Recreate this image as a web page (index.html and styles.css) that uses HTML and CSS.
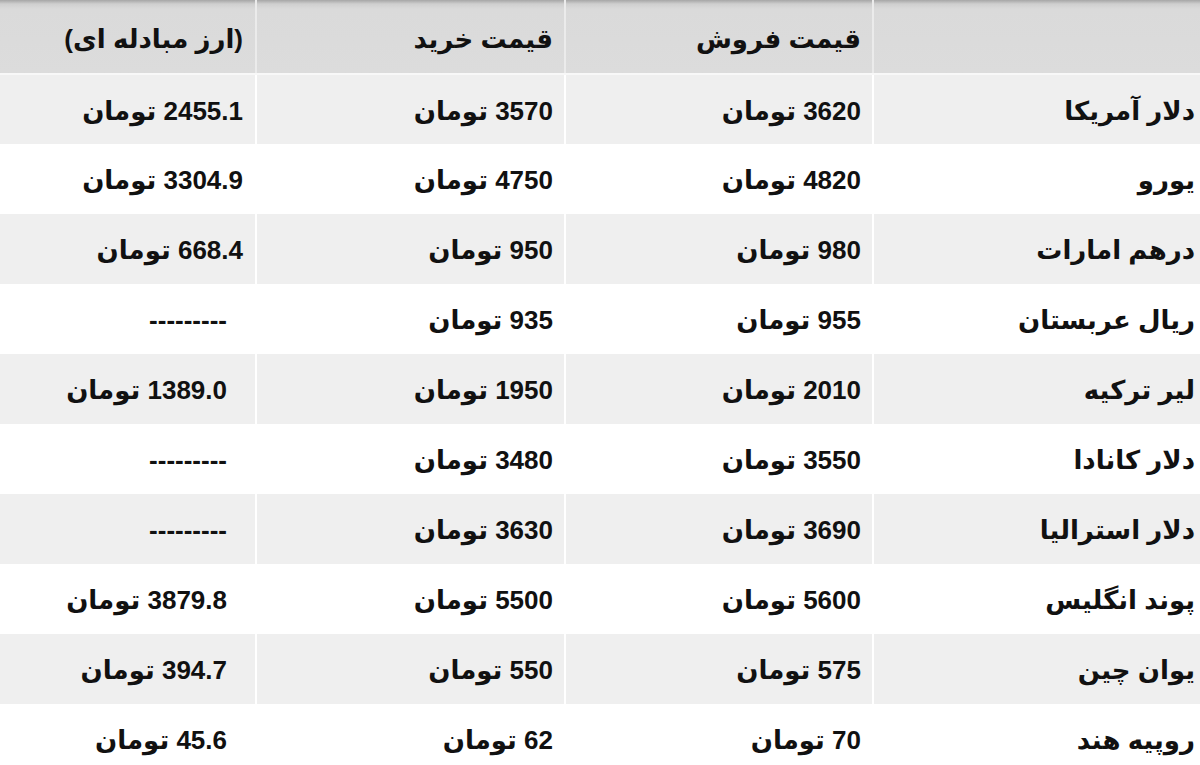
FILE: index.html
```html
<!DOCTYPE html>
<html lang="fa" dir="rtl">
<head>
<meta charset="utf-8">
<title>نرخ ارز</title>
<link rel="stylesheet" href="styles.css">
</head>
<body>
<table class="rates">
  <colgroup>
    <col class="c-name">
    <col class="c-sell">
    <col class="c-buy">
    <col class="c-ex">
  </colgroup>
  <thead>
    <tr>
      <th></th>
      <th>قیمت فروش</th>
      <th>قیمت خرید</th>
      <th>(ارز مبادله ای)</th>
    </tr>
  </thead>
  <tbody>
    <tr><td>دلار آمریکا</td><td>3620 تومان</td><td>3570 تومان</td><td>2455.1 تومان</td></tr>
    <tr><td>یورو</td><td>4820 تومان</td><td>4750 تومان</td><td>3304.9 تومان</td></tr>
    <tr><td>درهم امارات</td><td>980 تومان</td><td>950 تومان</td><td>668.4 تومان</td></tr>
    <tr><td>ریال عربستان</td><td>955 تومان</td><td>935 تومان</td><td class="indent">---------</td></tr>
    <tr><td>لیر ترکیه</td><td>2010 تومان</td><td>1950 تومان</td><td class="indent">1389.0 تومان</td></tr>
    <tr><td>دلار کانادا</td><td>3550 تومان</td><td>3480 تومان</td><td class="indent">---------</td></tr>
    <tr><td>دلار استرالیا</td><td>3690 تومان</td><td>3630 تومان</td><td class="indent">---------</td></tr>
    <tr><td>پوند انگلیس</td><td>5600 تومان</td><td>5500 تومان</td><td class="indent">3879.8 تومان</td></tr>
    <tr><td>یوان چین</td><td>575 تومان</td><td>550 تومان</td><td class="indent">394.7 تومان</td></tr>
    <tr><td>روپیه هند</td><td>70 تومان</td><td>62 تومان</td><td class="indent">45.6 تومان</td></tr>
  </tbody>
</table>
</body>
</html>
```
FILE: styles.css
```css
html, body {
  margin: 0;
  padding: 0;
  background: #ffffff;
}

body {
  font-family: "Liberation Sans", "DejaVu Sans", sans-serif;
  color: #111111;
  direction: rtl;
}

.rates {
  width: 1200px;
  border-collapse: collapse;
  table-layout: fixed;
}

.c-name { width: 327px; }
.c-sell { width: 308px; }
.c-buy { width: 309px; }
.c-ex { width: 256px; }

.rates th,
.rates td {
  text-align: right;
  padding: 0 11px 0 0;
  font-size: 26px;
  white-space: nowrap;
  border-left: 2px solid #ffffff;
}

.rates th:last-child,
.rates td:last-child {
  border-left: none;
  padding-right: 12px;
}

.rates th:first-child,
.rates td:first-child {
  padding-right: 5px;
}

.rates thead th {
  height: 74px;
  font-weight: bold;
  background: linear-gradient(#a6a6a6 0, #cfcfcf 4px, #dadada 9px, #dcdcdc 100%);
  border-left-color: #ebebeb;
  border-bottom: 2px solid #f8f8f8;
  padding-top: 6px;
  box-sizing: border-box;
}

.rates tbody td {
  height: 70px;
  padding-top: 3px;
  box-sizing: border-box;
  font-weight: bold;
}

.rates tbody tr:nth-child(odd) td {
  background: #efefef;
}

.rates tbody tr:nth-child(even) td {
  background: #ffffff;
}

.rates td.indent {
  padding-right: 28px;
}
```
